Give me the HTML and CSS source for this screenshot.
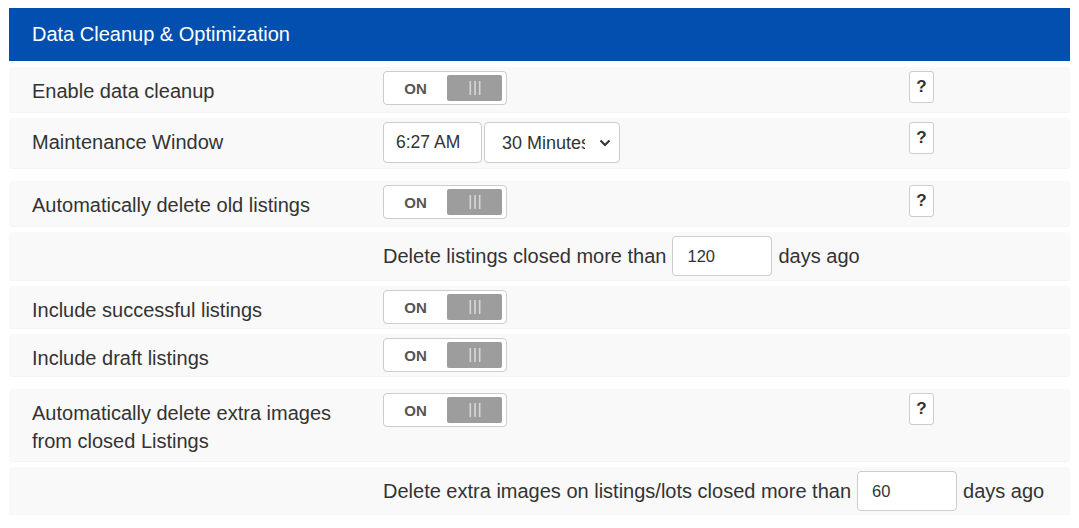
FILE: index.html
```html
<!DOCTYPE html>
<html lang="en">
<head>
<meta charset="utf-8">
<title>Data Cleanup &amp; Optimization</title>
<link rel="stylesheet" href="styles.css">
</head>
<body>
<div class="panel">
  <div class="panel-head">Data Cleanup &amp; Optimization</div>
  <div class="panel-body">
    <div class="group">
      <div class="row">
        <div class="label">Enable data cleanup</div>
        <div class="control">
          <div class="toggle"><span class="toggle-on">ON</span><span class="toggle-handle"><svg width="12" height="14" viewBox="0 0 12 14"><rect x="0.5" y="0" width="1.6" height="14"/><rect x="5.2" y="0" width="1.6" height="14"/><rect x="9.9" y="0" width="1.6" height="14"/></svg></span></div>
        </div>
        <div class="help"><button class="help-btn" type="button">?</button></div>
      </div>
      <div class="row">
        <div class="label">Maintenance Window</div>
        <div class="control">
          <div class="field-pair">
            <input class="input time-input" type="text" value="6:27 AM">
            <div class="select-wrap">
              <select class="select"><option>30 Minutes</option></select>
              <svg class="chevron" width="12" height="8" viewBox="0 0 12 8"><path d="M1.5 1.5 L6 6 L10.5 1.5" fill="none" stroke="#333" stroke-width="2"/></svg>
            </div>
          </div>
        </div>
        <div class="help"><button class="help-btn" type="button">?</button></div>
      </div>
    </div>

    <div class="group">
      <div class="row">
        <div class="label">Automatically delete old listings</div>
        <div class="control">
          <div class="toggle"><span class="toggle-on">ON</span><span class="toggle-handle"><svg width="12" height="14" viewBox="0 0 12 14"><rect x="0.5" y="0" width="1.6" height="14"/><rect x="5.2" y="0" width="1.6" height="14"/><rect x="9.9" y="0" width="1.6" height="14"/></svg></span></div>
        </div>
        <div class="help"><button class="help-btn" type="button">?</button></div>
      </div>
      <div class="row">
        <div class="label"></div>
        <div class="control inline-field">
          <span>Delete listings closed more than</span>
          <input class="input num-input" type="text" value="120">
          <span>days ago</span>
        </div>
      </div>
      <div class="row">
        <div class="label">Include successful listings</div>
        <div class="control">
          <div class="toggle"><span class="toggle-on">ON</span><span class="toggle-handle"><svg width="12" height="14" viewBox="0 0 12 14"><rect x="0.5" y="0" width="1.6" height="14"/><rect x="5.2" y="0" width="1.6" height="14"/><rect x="9.9" y="0" width="1.6" height="14"/></svg></span></div>
        </div>
      </div>
      <div class="row">
        <div class="label">Include draft listings</div>
        <div class="control">
          <div class="toggle"><span class="toggle-on">ON</span><span class="toggle-handle"><svg width="12" height="14" viewBox="0 0 12 14"><rect x="0.5" y="0" width="1.6" height="14"/><rect x="5.2" y="0" width="1.6" height="14"/><rect x="9.9" y="0" width="1.6" height="14"/></svg></span></div>
        </div>
      </div>
    </div>

    <div class="group">
      <div class="row">
        <div class="label label-tall">Automatically delete extra images<br>from closed Listings</div>
        <div class="control">
          <div class="toggle"><span class="toggle-on">ON</span><span class="toggle-handle"><svg width="12" height="14" viewBox="0 0 12 14"><rect x="0.5" y="0" width="1.6" height="14"/><rect x="5.2" y="0" width="1.6" height="14"/><rect x="9.9" y="0" width="1.6" height="14"/></svg></span></div>
        </div>
        <div class="help"><button class="help-btn" type="button">?</button></div>
      </div>
      <div class="row">
        <div class="label"></div>
        <div class="control control-wide inline-field">
          <span>Delete extra images on listings/lots closed more than</span>
          <input class="input num-input" type="text" value="60">
          <span>days ago</span>
        </div>
      </div>
    </div>
  </div>
</div>
</body>
</html>
```

FILE: styles.css
```css
* {
  box-sizing: border-box;
}

body {
  margin: 0;
  background: #ffffff;
  font-family: "Liberation Sans", Arial, sans-serif;
  color: #333333;
}

.panel {
  margin: 8px 9px 0 9px;
}

.panel-head {
  height: 53px;
  background: #034fb0;
  color: #ffffff;
  font-size: 20px;
  display: flex;
  align-items: center;
  padding-left: 23px;
}

.panel-body {
  display: flex;
  flex-direction: column;
  gap: 13px;
  padding-top: 6px;
}

.group {
  display: flex;
  flex-direction: column;
  gap: 6px;
}

.row {
  display: grid;
  grid-template-columns: 351px 526px 1fr;
  align-items: start;
  padding: 4px 0 0 23px;
  background: #f9f9f9;
  border-radius: 4px;
  box-shadow: 0 1px 1px rgba(0, 0, 0, 0.05);
}

.label {
  font-size: 20px;
  line-height: 28px;
  padding: 6px 0 4px 0;
  color: #333333;
}

.label-tall {
  padding-bottom: 6px;
}

.control {
  min-width: 0;
}

.control-wide {
  grid-column: 2 / 4;
}

/* toggle switch */
.toggle {
  width: 124px;
  height: 34px;
  border: 1px solid #cccccc;
  border-radius: 4px;
  background: #ffffff;
  display: flex;
  align-items: stretch;
  margin-bottom: 4px;
}

.toggle-on {
  width: 63px;
  display: flex;
  align-items: center;
  justify-content: center;
  font-size: 15px;
  font-weight: bold;
  color: #555555;
}

.toggle-handle {
  width: 55px;
  margin: 3px 0 3px 0;
  background: #9d9d9d;
  border-radius: 2px;
  display: flex;
  align-items: center;
  justify-content: center;
}

.toggle-handle svg {
  fill: #d6d6d6;
  display: block;
}

/* help button */
.help-btn {
  width: 25px;
  height: 32px;
  margin-bottom: 9px;
  border: 1px solid #cccccc;
  border-radius: 3px;
  background: #ffffff;
  font-family: "Liberation Sans", Arial, sans-serif;
  font-size: 17px;
  font-weight: bold;
  color: #333333;
  padding: 0;
  display: block;
}

/* inputs */
.field-pair {
  display: flex;
  gap: 2px;
  margin-bottom: 5px;
}

.input {
  height: 41px;
  border: 1px solid #cccccc;
  border-radius: 4px;
  background: #ffffff;
  font-family: "Liberation Sans", Arial, sans-serif;
  color: #333333;
  outline: none;
}

.time-input {
  width: 99px;
  padding: 0 12px;
  font-size: 17.5px;
}

.select-wrap {
  position: relative;
  width: 136px;
  height: 41px;
}

.select {
  appearance: none;
  -webkit-appearance: none;
  width: 136px;
  height: 41px;
  border: 1px solid #cccccc;
  border-radius: 4px;
  background: #ffffff;
  font-family: "Liberation Sans", Arial, sans-serif;
  font-size: 18px;
  color: #333333;
  padding: 0 34px 0 17px;
}

.chevron {
  position: absolute;
  right: 9px;
  top: 17px;
  pointer-events: none;
}

.inline-field {
  display: flex;
  align-items: center;
  gap: 6px;
  font-size: 20px;
  color: #333333;
  padding-bottom: 4px;
}

.inline-field .num-input {
  height: 40px;
}

.num-input {
  width: 100px;
  padding: 0 14px;
  font-size: 16.5px;
}
```
